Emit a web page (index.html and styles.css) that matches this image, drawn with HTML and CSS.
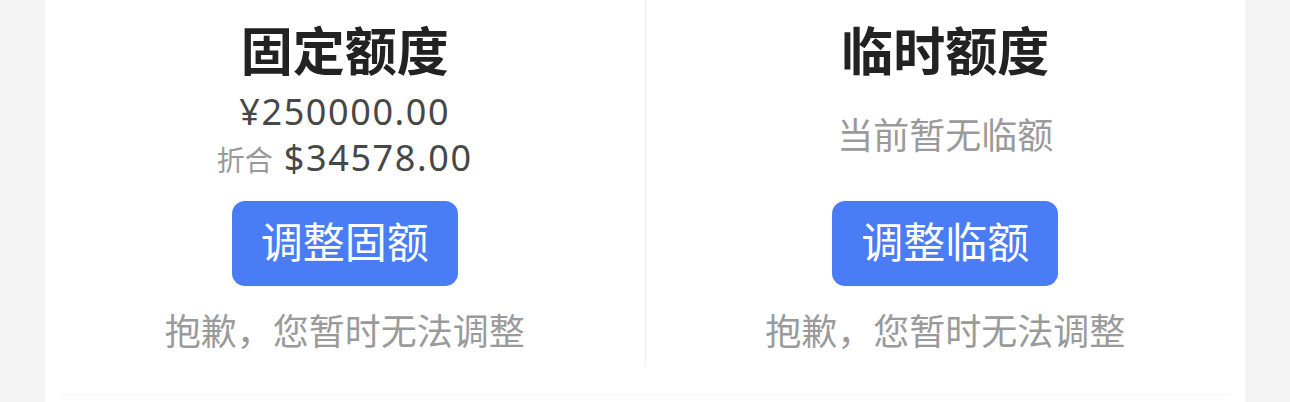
FILE: index.html
```html
<!DOCTYPE html>
<html lang="zh-CN">
<head>
    <meta charset="UTF-8">
    <meta name="viewport" content="width=device-width, initial-scale=1.0">
    <title>额度</title>
    <link rel="stylesheet" href="styles.css">
</head>
<body>
    <div class="card">
        <div class="quota-row">
            <div class="quota">
                <h1>固定额度</h1>
                <div class="info">
                    <div class="amount">¥250000.00</div>
                    <div class="amount"><span class="label">折合</span> $34578.00</div>
                </div>
                <button>调整固额</button>
                <p class="note">抱歉，您暂时无法调整</p>
            </div>
            <div class="quota">
                <h1>临时额度</h1>
                <div class="info">
                    <div class="empty">当前暂无临额</div>
                </div>
                <button>调整临额</button>
                <p class="note">抱歉，您暂时无法调整</p>
            </div>
        </div>
        <div class="split"></div>
    </div>
</body>
</html>
```

FILE: styles.css
```css
body {
    margin: 0;
    background-color: #f4f4f4;
    font-family: "Noto Sans", "Noto Sans CJK SC", sans-serif;
}
.card {
    margin: 0 45px;
    background-color: #fff;
    height: 402px;
}
.quota-row {
    display: flex;
}
.quota {
    flex: 1;
    display: flex;
    flex-direction: column;
    align-items: center;
    padding-top: 21px;
    padding-bottom: 10px;
}
.quota + .quota {
    border-left: 1px solid #ececec;
}
h1 {
    margin: 0;
    font-size: 52px;
    line-height: 60px;
    font-weight: bold;
    color: #222;
}
.info {
    height: 109px;
    display: flex;
    flex-direction: column;
    justify-content: center;
    align-items: center;
}
.amount {
    font-size: 36px;
    line-height: 46px;
    color: #474747;
    letter-spacing: 1.6px;
}
.label {
    font-size: 28px;
    color: #999;
    letter-spacing: 0;
}
.empty {
    font-size: 36px;
    line-height: 46px;
    color: #9a9a9a;
}
button {
    margin-top: 11px;
    padding: 16px 29px 20px;
    border: none;
    border-radius: 13px;
    background-color: #4a7cf6;
    color: #fff;
    font-family: inherit;
    font-size: 42px;
    line-height: 49px;
}
.note {
    margin: 23px 0 0;
    font-size: 36px;
    line-height: 46px;
    color: #9a9a9a;
}
.split {
    margin: 29px 15px 0;
    border-top: 1px solid #f6f6f6;
}
```
